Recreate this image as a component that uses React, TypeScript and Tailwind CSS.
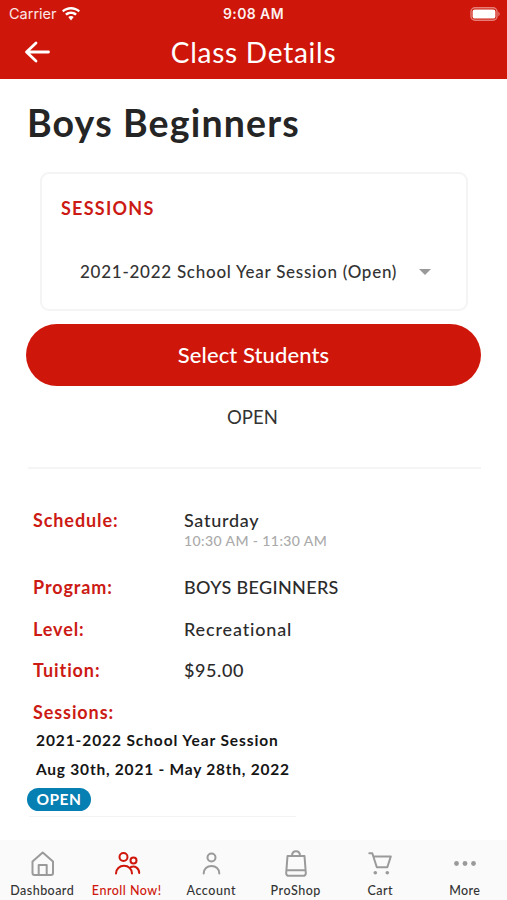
import type { ReactNode } from "react";

function StatusBar() {
  return (
    <div className="grid h-7 grid-cols-3 items-center pl-[9px] pr-[7px] text-white">
      <div className="flex items-center gap-1.5 font-['Inter'] text-[14.5px] leading-7 tracking-[0px] text-white/90">
        Carrier
        <svg className="-ml-px" width="18" height="14" viewBox="0 0 18 14" fill="white">
          <path d="M9 0C5.600 0 2.500 1.300 0 3.500l1.500 1.700C3.500 3.400 6.100 2.400 9 2.400s5.500 1 7.500 2.800L18 3.500C15.500 1.300 12.400 0 9 0Z" />
          <path d="M9 4.600c-2.200 0-4.200.8-5.900 2.200l1.600 1.800C5.900 7.500 7.400 6.900 9 6.900s3.100.6 4.300 1.700l1.600-1.800C13.200 5.400 11.200 4.600 9 4.600Z" />
          <path d="M9 9c-1 0-2 .4-2.700 1L9 13.600 11.700 10C11 9.400 10 9 9 9Z" />
        </svg>
      </div>
      <div className="pr-[2px] text-center font-['Inter'] text-[14px] font-semibold leading-7 tracking-[0.4px] text-white/95">
        9:08 AM
      </div>
      <svg className="justify-self-end" width="30" height="14" viewBox="0 0 30 14">
        <rect x="1" y="0.800" width="26" height="12.400" rx="4" fill="none" stroke="white" strokeOpacity="0.45" strokeWidth="1.400" />
        <rect x="2.600" y="2.400" width="22.800" height="9.200" rx="2.200" fill="white" />
        <path d="M28.400 4.800v4.400c.8-.4 1.200-1.200 1.200-2.200s-.4-1.800-1.200-2.200Z" fill="white" fillOpacity="0.5" />
      </svg>
    </div>
  );
}

function Detail({ label, className, track, children }: { label: string; className: string; track?: string; children?: ReactNode }) {
  return (
    <div className={`flex pl-[33px] text-[18px] leading-[22px] ${className}`}>
      <div className="w-[151px] font-bold tracking-[0.9px] text-[#cc1a14]">{label}</div>
      <div className={`font-medium text-[#2b2b2b] ${track ?? ""}`}>{children}</div>
    </div>
  );
}

function Tab({ label, active, track, children }: { label: string; active?: boolean; track: string; children: ReactNode }) {
  return (
    <div className={`flex flex-1 flex-col items-center pt-2 ${active ? "text-[#cf160a]" : "text-[#9a9a9a]"}`}>
      <svg width="32" height="32" viewBox="0 0 32 32" fill="none" stroke="currentColor" strokeWidth="2" strokeLinecap="round" strokeLinejoin="round">
        {children}
      </svg>
      <div className={`mt-[3px] whitespace-nowrap text-[12.5px] font-medium leading-4 ${track} ${active ? "text-[#cf160a]" : "text-[#333]"}`}>
        {label}
      </div>
    </div>
  );
}

export default function App() {
  return (
    <div className="flex h-[900px] w-[507px] flex-col overflow-hidden whitespace-nowrap bg-white font-['Lato',sans-serif]">
      <header className="h-[79px] bg-[#cf160a]">
        <StatusBar />
        <div className="grid h-[47px] grid-cols-[60px_1fr_60px] items-center text-white">
          <svg className="ml-[24px]" width="27" height="24" viewBox="0 0 27 24" fill="none" stroke="white" strokeWidth="2.800" strokeLinecap="round" strokeLinejoin="round">
            <path d="M24.500 12H3M12 3 2.500 12l9.500 9" />
          </svg>
          <h1 className="text-center text-[28px] leading-[32px] tracking-[0.75px]">Class Details</h1>
        </div>
      </header>

      <main className="flex h-[761px] flex-col">
        <h2 className="ml-[27px] mt-[22px] text-[37.5px] font-bold leading-[44px] tracking-[1.15px] text-[#252525]">
          Boys Beginners
        </h2>

        <section className="ml-[40px] mt-[27px] h-[139px] w-[428px] rounded-[9px] border-2 border-[#f4f4f4] pt-[23px]">
          <h3 className="ml-[19px] text-[18px] font-bold leading-[22px] tracking-[1.25px] text-[#cc1a14]">SESSIONS</h3>
          <div className="ml-[38px] mr-[35px] mt-[42px] flex items-center justify-between">
            <span className="text-[17px] font-medium leading-[22px] tracking-[0.74px] text-[#333]">
              2021-2022 School Year Session (Open)
            </span>
            <svg width="12" height="6" viewBox="0 0 12 6" fill="#999">
              <path d="M0 0h12L6 6Z" />
            </svg>
          </div>
        </section>

        <button className="ml-[26px] mt-[13px] flex h-[62px] w-[455px] items-center justify-center rounded-full bg-[#cf160a] text-[22px] font-medium leading-[28px] tracking-[0.1px] text-white">
          Select Students
        </button>
        <div className="mt-[20px] pr-[2px] text-center text-[18.5px] leading-[22px] tracking-[0.1px] text-[#333]">OPEN</div>
        <div className="ml-[28px] mt-[39px] h-[2px] w-[453px] bg-[#f5f5f5]" />

        <Detail label="Schedule:" className="mt-[40px] h-[67px]" track="tracking-[0.7px]">
          Saturday
          <div className="text-[14px] leading-[20px] tracking-[0.4px] text-[#aaa]">10:30 AM - 11:30 AM</div>
        </Detail>
        <Detail label="Program:" className="h-[42px]" track="tracking-[0.35px]">BOYS BEGINNERS</Detail>
        <Detail label="Level:" className="h-[41px]" track="tracking-[0.85px]">Recreational</Detail>
        <Detail label="Tuition:" className="h-[42px]" track="tracking-[0.6px]">$95.00</Detail>
        <Detail label="Sessions:" className="h-[22px]" />
        <div className="ml-[36px] mt-[3px] text-[15.5px] font-bold leading-[29px] text-[#151515]">
          <div className="tracking-[0.9px]">2021-2022 School Year Session</div>
          <div className="tracking-[0.77px]">Aug 30th, 2021 - May 28th, 2022</div>
        </div>
        <div className="ml-[27px] mt-[4px] flex h-[23px] w-[64px] items-center justify-center rounded-full bg-[#067fb3] pb-px text-[15.5px] font-bold leading-[22px] tracking-[0.5px] text-white">
          OPEN
        </div>
        <div className="ml-[29px] mt-[5px] h-px w-[267px] bg-[#f3f3f3]" />
      </main>

      <nav className="flex h-[60px] bg-[#fafafa]">
        <Tab label="Dashboard" track="tracking-[0.45px]">
          <path d="M6.500 13.500 16.700 4.500l10.300 9V25a2 2 0 0 1-2 2h-16.500a2 2 0 0 1-2-2ZM12.700 26.500V17h8v9.500" />
        </Tab>
        <Tab label="Enroll Now!" active track="tracking-[0.5px]">
          <circle cx="12.500" cy="9" r="4" />
          <circle cx="22.500" cy="12.500" r="3" />
          <path d="M5 25.500c0-4.500 3.500-7.700 8-7.700s8 3.200 8 7.700M20 19c4-1.700 8.200 1.500 8.200 6" />
        </Tab>
        <Tab label="Account" track="tracking-[0.55px]">
          <circle cx="16.500" cy="9.500" r="4" />
          <path d="M8.700 25.500c0-4.500 3.400-7.500 7.800-7.500s7.800 3 7.800 7.500" />
        </Tab>
        <Tab label="ProShop" track="tracking-[0.55px]">
          <path d="M7.500 8h17l1.300 17a2.500 2.500 0 0 1-2.500 2.800h-14.600A2.500 2.500 0 0 1 6.200 25ZM6.500 22.300h19M12 8c0-2.700 1.500-4.800 4-4.800s4 2.100 4 4.800" />
        </Tab>
        <Tab label="Cart" track="tracking-[0.4px]">
          <path d="M5.300 5.300h3l4.500 14h10.500l3.500-10.800H9.500" />
          <circle cx="11.300" cy="24.700" r="1.800" fill="currentColor" stroke="none" />
          <circle cx="23.300" cy="24.700" r="1.800" fill="currentColor" stroke="none" />
        </Tab>
        <Tab label="More" track="tracking-[0.4px]">
          <g fill="currentColor" stroke="none">
            <circle cx="7.500" cy="15.500" r="2.400" />
            <circle cx="16" cy="15.500" r="2.400" />
            <circle cx="24.500" cy="15.500" r="2.400" />
          </g>
        </Tab>
      </nav>
    </div>
  );
}
